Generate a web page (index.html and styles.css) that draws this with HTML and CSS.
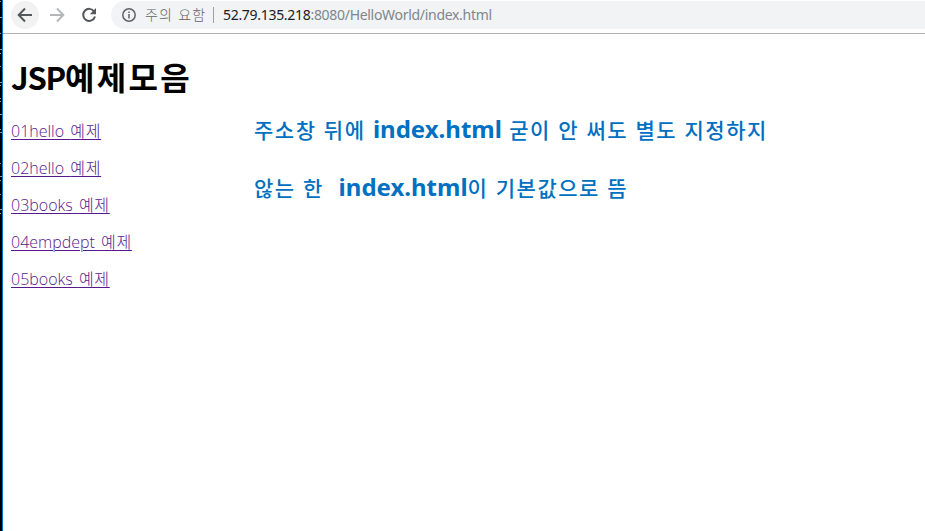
FILE: index.html
```html
<!DOCTYPE html>
<html lang="ko">
<head>
<meta charset="utf-8">
<title>JSP예제모음</title>
<link rel="stylesheet" href="styles.css">
</head>
<body>
<div class="desktop">
  <svg class="edge" width="2" height="531" viewBox="0 0 2 531" fill="none" stroke="#96918c"><path d="M0 1.5h1M0 17.5h2M0 33.5h1M0 49.5h2M0 53.5h1M0 66.5h1M0 82.5h2M0 85.5h1M0 98.5h1M0 101.5h1M0 114.5h2M0 129.5h1M0 132.5h2M0 163.5h1M0 176.5h2M0 180.5h1M0 194.5h1M0 209.5h2M0 213.5h1"/></svg>
  <div class="window">
    <header class="toolbar">
      <button class="nav back" aria-label="뒤로"><svg width="16" height="16" viewBox="0 0 16 16"><path d="M15 8H2M8 1.5 1.7 8 8 14.5"/></svg></button>
      <button class="nav forward" aria-label="앞으로"><svg width="16" height="16" viewBox="0 0 16 16"><path d="M1 8h13M8 1.5 14.3 8 8 14.5"/></svg></button>
      <button class="nav reload" aria-label="새로고침"><svg width="16" height="16" viewBox="0 0 16 16"><path d="M13.2 4.5A6 6 0 1 0 14 9.5"/><path class="tip" d="M15 1v6.2H8.8z"/></svg></button>
      <div class="address">
        <svg class="info" width="14" height="14" viewBox="0 0 14 14"><circle cx="7" cy="7" r="6.2"/><path d="M7 6v4.6M7 3.4v1.6"/></svg>
        <span class="warning">주의 요함</span>
        <span class="divider"></span>
        <span class="url"><span class="host">52.79.135.218</span><span class="path">:8080/HelloWorld/index.html</span></span>
      </div>
    </header>
    <main class="page">
      <section class="examples">
        <h1><span class="jsp">JSP</span>예제모음</h1>
        <p><a href="#">01hello <span class="ko">예제</span></a></p>
        <p><a href="#">02hello <span class="ko">예제</span></a></p>
        <p><a href="#">03books <span class="ko">예제</span></a></p>
        <p><a href="#">04empdept <span class="ko">예제</span></a></p>
        <p><a href="#">05books <span class="ko">예제</span></a></p>
      </section>
      <aside class="note">
        <div class="line">주소창 뒤에 <b>index.html</b> 굳이 안 써도 별도 지정하지</div>
        <div class="line">않는 한&nbsp; <b>index.html</b>이 기본값으로 뜸</div>
      </aside>
    </main>
  </div>
</div>
</body>
</html>
```

FILE: styles.css
```css
* { box-sizing: border-box; }
body { margin: 0; background: #fff; font-family: "Noto Sans", "Noto Sans CJK KR", sans-serif; overflow: hidden; }
.desktop { display: flex; width: 925px; height: 531px; background: #000; }
.edge { display: block; flex: none; }
.window { flex: 1; min-width: 0; border-left: 1px solid #0078d7; background: #fff; }
.toolbar { display: flex; height: 34px; padding: 1px 0 4px 8px; border-bottom: 1px solid #b2b0b2; }
.nav { display: flex; align-items: center; justify-content: center; width: 28px; height: 28px; margin-right: 4px; padding: 0; border: 0; border-radius: 50%; background: none; }
.nav svg { fill: none; stroke: #54575b; stroke-width: 2; }
.back { background: #f2f2f2; }
.nav.forward svg { stroke: #b6b7b9; }
.reload { margin-right: 8px; }
.reload .tip { fill: #54575b; stroke: none; }
.address { display: flex; flex: 1; align-items: center; height: 28px; padding-left: 11px; border-radius: 14px 0 0 14px; background: #f1f3f4; font-size: 14px; line-height: 20px; white-space: nowrap; }
.info { flex: none; fill: none; stroke: #5f6368; stroke-width: 1.5; }
.warning { width: 61px; margin: 0 0 2px 9px; color: #5f6368; font-size: 14px; font-family: "Noto Sans CJK KR", sans-serif; font-weight: 300; letter-spacing: 1.2px; }
.divider { width: 1px; height: 16px; margin: 0 9px 0 7px; background: #9aa0a6; }
.url { letter-spacing: -.3px; }
.host { color: #202124; }
.path { color: #80868b; }
.page { display: flex; }
.examples { width: 242px; padding: 21px 0 0 8px; }
h1 { margin: 0 0 23px; font-size: 32px; line-height: 43px; font-weight: 700; font-family: "Noto Sans CJK KR", sans-serif; letter-spacing: 2.3px; white-space: nowrap; }
.jsp { font-size: 31px; letter-spacing: -1.2px; }
.examples p { margin: 0 0 16px; font-family: "Open Sans", "Noto Sans CJK KR", sans-serif; font-size: 16px; line-height: 21px; font-weight: 300; white-space: nowrap; }
.examples a { color: #551a8b; text-decoration: underline; text-decoration-thickness: 1px; text-underline-offset: 2px; word-spacing: 2px; }
.ko { letter-spacing: .7px; }
.note { padding: 66px 0 0 9px; color: #0070c0; font-family: "Noto Sans CJK KR", sans-serif; font-size: 21px; font-weight: 500; white-space: nowrap; }
.line { height: 58px; line-height: 58px; letter-spacing: 1.5px; }
.line b { font-family: "Noto Sans", sans-serif; font-size: 24px; letter-spacing: 0; }
```
